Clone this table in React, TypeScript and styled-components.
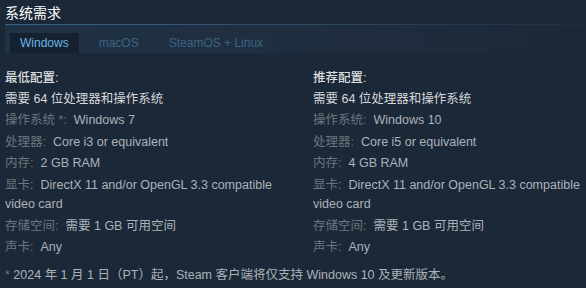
import styled, { createGlobalStyle } from "styled-components";

const GlobalStyle = createGlobalStyle`
  body {
    margin: 0;
    background: #1b2838;
    font-family: "Liberation Sans", "Noto Sans CJK SC", sans-serif;
  }
`;

interface Spec {
  label: string;
  value: string;
}

const minimum: Spec[] = [
  { label: "操作系统 *:", value: "Windows 7" },
  { label: "处理器:", value: "Core i3 or equivalent" },
  { label: "内存:", value: "2 GB RAM" },
  { label: "显卡:", value: "DirectX 11 and/or OpenGL 3.3 compatible video card" },
  { label: "存储空间:", value: "需要 1 GB 可用空间" },
  { label: "声卡:", value: "Any" },
];

const recommended: Spec[] = [
  { label: "操作系统:", value: "Windows 10" },
  { label: "处理器:", value: "Core i5 or equivalent" },
  { label: "内存:", value: "4 GB RAM" },
  { label: "显卡:", value: "DirectX 11 and/or OpenGL 3.3 compatible video card" },
  { label: "存储空间:", value: "需要 1 GB 可用空间" },
  { label: "声卡:", value: "Any" },
];

const tabs = ["Windows", "macOS", "SteamOS + Linux"];

const Column = ({ title, specs }: { title: string; specs: Spec[] }) => (
  <Col>
    <Heading>{title}</Heading>
    <Row $bright>需要 64 位处理器和操作系统</Row>
    {specs.map((s) => (
      <Row key={s.label}>
        <Label>{s.label}</Label>
        {s.value}
      </Row>
    ))}
  </Col>
);

const App = () => (
  <Page>
    <GlobalStyle />
    <Title>系统需求</Title>
    <TabBar>
      {tabs.map((t, i) => (
        <Tab key={t} $active={i === 0}>
          {t}
        </Tab>
      ))}
    </TabBar>
    <Columns>
      <Column title="最低配置:" specs={minimum} />
      <Column title="推荐配置:" specs={recommended} />
    </Columns>
    <Note>
      <Star>*</Star> 2024 年 1 月 1 日（PT）起，Steam 客户端将仅支持 Windows 10 及更新版本。
    </Note>
  </Page>
);

const Page = styled.div`
  width: 586px;
  height: 288px;
  padding-left: 5px;
  box-sizing: border-box;
  overflow: hidden;
`;

const Title = styled.h2`
  margin: 0;
  height: 25px;
  padding-top: 5px;
  box-sizing: border-box;
  font-size: 14px;
  font-weight: normal;
  line-height: 17px;
  color: #ffffff;
  border-bottom: 1px solid;
  border-image: linear-gradient(90deg, #3d6386 0%, #2f4c68 50%, #1f2d3d 100%) 1;
`;

const TabBar = styled.div`
  display: flex;
  gap: 10px;
  height: 28px;
  padding: 8px 0 0 5px;
  box-sizing: border-box;
  background: linear-gradient(90deg, #203246 0%, #1f2d3e 60%, #1c2838 100%);
`;

const Tab = styled.div<{ $active?: boolean }>`
  height: 20px;
  padding: 0 10px;
  font-size: 12px;
  line-height: 20px;
  color: ${(p) => (p.$active ? "#67b5e6" : "#3b6583")};
  background: ${(p) => (p.$active ? "#162130" : "transparent")};
`;

const Columns = styled.div`
  display: grid;
  grid-template-columns: 288px 273px;
  column-gap: 20px;
  margin-top: 16px;
`;

const Col = styled.ul`
  margin: 0;
  padding: 0;
  list-style: none;
  font-size: 12.5px;
  line-height: 19.5px;
  color: #acb2b8;
`;

const Heading = styled.li`
  margin-bottom: 1px;
  font-weight: 500;
  color: #dcdedf;
`;

const Row = styled.li<{ $bright?: boolean }>`
  margin-bottom: 2px;
  color: ${(p) => (p.$bright ? "#d6d7d8" : "#acb2b8")};
`;

const Label = styled.span`
  margin-right: 7px;
  color: #6e757c;
`;

const Note = styled.div`
  margin-top: 6px;
  font-size: 12.5px;
  line-height: 19.5px;
  color: #acb2b8;
`;

const Star = styled.span`
  color: #6e757c;
`;

export default App;
